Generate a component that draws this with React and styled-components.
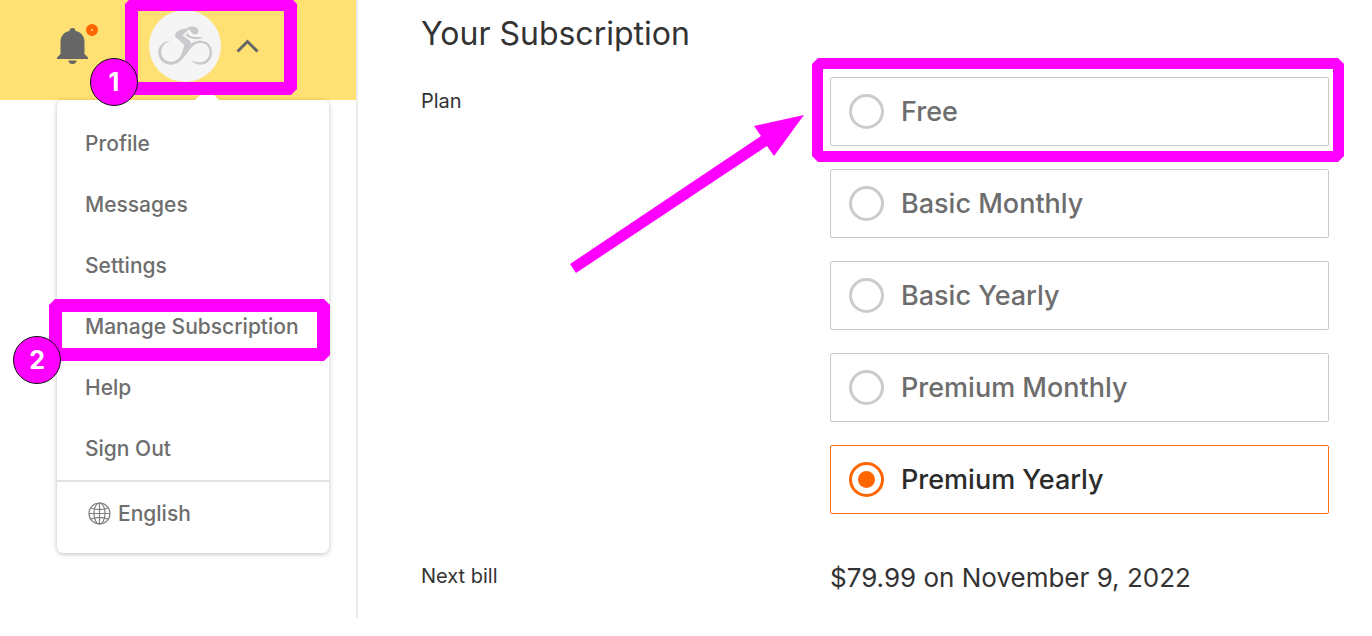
import React, { useState } from 'react'
import styled, { createGlobalStyle } from 'styled-components'

const GlobalStyle = createGlobalStyle`
  * {
    box-sizing: border-box;
  }
  body {
    margin: 0;
    background: #fff;
    color: #333;
    font-family: Inter, 'Liberation Sans', sans-serif;
  }
  button, input {
    font: inherit;
  }
`

const pink = '#ff00ff'

const Page = styled.div`
  display: flex;
  align-items: flex-start;
`

const Side = styled.aside`
  flex: 0 0 358px;
  min-height: 618px;
  border-right: 2px solid #ececec;
`

const TopBar = styled.header`
  display: flex;
  align-items: flex-start;
  height: 100px;
  padding: 10px 0 0 57px;
  gap: 61px;
  background: #ffe072;
`

const BellButton = styled.button`
  position: relative;
  display: flex;
  margin-top: 18px;
  padding: 0;
  border: 0;
  background: none;
`

const Dot = styled.span`
  position: absolute;
  top: -4px;
  left: 29px;
  width: 12px;
  height: 12px;
  border: 5px solid #ff6600;
  border-radius: 50%;
`

const AccountButton = styled.button`
  position: relative;
  display: flex;
  align-items: center;
  gap: 15px;
  padding: 0;
  border: 0;
  background: none;
`

const Menu = styled.nav`
  position: relative;
  width: 272px;
  margin-left: 57px;
  padding-top: 13px;
  background: #fff;
  border-radius: 6px;
  box-shadow: 0 1px 5px rgba(0, 0, 0, 0.26);

  &::before {
    content: '';
    position: absolute;
    top: -12px;
    left: 138px;
    border: 12px solid transparent;
    border-top: 0;
    border-bottom-color: #fff;
  }
`

const MenuList = styled.ul`
  margin: 0;
  padding: 0 0 1px;
  list-style: none;
  border-bottom: 2px solid #e2e2e2;
`

const MenuItem = styled.li`
  position: relative;
`

const MenuLink = styled.a`
  display: flex;
  align-items: center;
  height: 61px;
  padding-left: 28px;
  color: #6e6e6e;
  font-size: 21px;
  font-weight: 500;
  text-decoration: none;
`

const Language = styled.button`
  display: flex;
  align-items: center;
  gap: 7px;
  width: 100%;
  height: 71px;
  padding: 0 0 8px 31px;
  border: 0;
  background: none;
  color: #6e6e6e;
  font-size: 21px;
  font-weight: 500;
`

// thick marker outline with cut corners, drawn over its parent
const Highlight = styled.span`
  position: absolute;
  z-index: 2;
  top: ${({ $top }) => $top}px;
  right: ${({ $right }) => $right}px;
  bottom: ${({ $bottom }) => $bottom}px;
  left: ${({ $left }) => $left}px;
  border: ${({ $thick }) => $thick}px solid ${pink};
  clip-path: polygon(
    6px 0, calc(100% - 6px) 0, 100% 6px, 100% calc(100% - 6px),
    calc(100% - 6px) 100%, 6px 100%, 0 calc(100% - 6px), 0 6px
  );
  pointer-events: none;
`

const Step = styled.span`
  position: absolute;
  z-index: 3;
  top: ${({ $top }) => $top}px;
  left: ${({ $left }) => $left}px;
  display: flex;
  align-items: center;
  justify-content: center;
  width: 48px;
  height: 48px;
  border: 1px solid #111;
  border-radius: 50%;
  background: ${pink};
  color: #fff;
  font-size: 25px;
  font-weight: 700;
`

const Main = styled.main`
  flex: 1;
  min-width: 0;
  padding: 14px 43px 0 63px;
`

const Title = styled.h1`
  margin: 0 0 23px;
  font-size: 32px;
  line-height: 40px;
  font-weight: 400;
`

const Row = styled.section`
  position: relative;
  display: grid;
  grid-template-columns: 409px 1fr;
  margin-bottom: 46px;
`

const RowName = styled.h2`
  margin: 0;
  padding-top: ${({ $drop }) => $drop}px;
  font-size: 20px;
  line-height: 24px;
  font-weight: 400;
`

const Arrow = styled.svg`
  position: absolute;
  z-index: 2;
  top: 38px;
  left: 148px;
`

const Plans = styled.div`
  display: flex;
  flex-direction: column;
  gap: 23px;
`

const Plan = styled.label`
  position: relative;
  display: flex;
  align-items: center;
  gap: 17px;
  height: 69px;
  padding-left: 18px;
  border: 1px solid ${({ $checked }) => ($checked ? '#fc6a1c' : '#c8c8c8')};
  border-radius: 2px;
  color: ${({ $checked }) => ($checked ? '#2b2b2b' : '#6d6d6d')};
  font-size: 27px;
  font-weight: 500;
`

const Radio = styled.input`
  appearance: none;
  display: grid;
  place-content: center;
  width: 35px;
  height: 35px;
  margin: 0;
  border: 3px solid #cbcbcb;
  border-radius: 50%;

  &:checked {
    border-color: #ff6600;
  }
  &:checked::before {
    content: '';
    width: 17px;
    height: 17px;
    border-radius: 50%;
    background: #ff6600;
  }
`

const Bill = styled.p`
  margin: 0;
  padding-top: 1px;
  font-size: 26px;
  line-height: 34px;
`

const BellIcon = () => (
  <svg width="31" height="36" viewBox="0 0 31 36" fill="#666">
    <path d="M15.500 0c-2 0-3 1-3 3-5.500 1-9 5-9 11v12L0 29.500V31h31v-1.500L27.500 26V14c0-6-3.500-10-9-11 0-2-1-3-3-3zM11.500 32.500h8c0 2-1.500 3.500-4 3.500s-4-1.500-4-3.500z" />
  </svg>
)

const Avatar = () => (
  <svg width="72" height="72" viewBox="0 0 216 216">
    <circle cx="108" cy="108" r="108" fill="#f5f5f5" />
    <g fill="#c8c8cd" transform="translate(3 18)">
      <path d="M62 76C42 73 25 88 25 109c0 21 16 37 37 37 18 0 29-9 40-23l18-23c10-13 18-19 32-19 16 0 27 12 27 27 0 17-12 31-28 31-10 0-18-2-26-7 6 9 15 14 27 14 20 0 34-16 34-37 0-21-14-35-35-35-16 0-27 6-38 20l-19 24c-9 12-18 19-32 19-17 0-28-12-28-28 0-18 11-31 28-33z" />
      <path d="M75 57c2-9 11-16 25-18l18-3c-2 8-11 13-16 17l-5 5 20 14c7 5 7 10 2 17l-18 30-9 4c4-12 8-26 11-36L83 68c-6-3-9-6-8-11z" />
      <path d="M112 50c4 7 10 12 20 13l27 1c-6 5-18 6-28 5-12-2-20-6-24-12z" />
      <path d="M112 37c6-7 22-7 29-1 6 6 6 14 1 17-6 4-14 2-19-5-3-5-6-9-11-11z" />
    </g>
  </svg>
)

const Chevron = () => (
  <svg width="23" height="16" viewBox="0 0 23 16" fill="none" stroke="#666" strokeWidth="3">
    <path d="M1.500 13.500 11.500 3.500 21.500 13.500" />
  </svg>
)

const Globe = () => (
  <svg width="23" height="23" viewBox="0 0 23 23" fill="none" stroke="#808080" strokeWidth="1.200">
    <circle cx="11.500" cy="11.500" r="10.500" />
    <ellipse cx="11.500" cy="11.500" rx="5.500" ry="10.500" />
    <path d="M11.500 1v21M1 11.500h21M3 6c5 2 12 2 17 0M3 17c5-2 12-2 17 0" />
  </svg>
)

const menuItems = ['Profile', 'Messages', 'Settings', 'Manage Subscription', 'Help', 'Sign Out']
const plans = ['Free', 'Basic Monthly', 'Basic Yearly', 'Premium Monthly', 'Premium Yearly']

const App = () => {
  const [plan, setPlan] = useState('Premium Yearly')

  return (
    <Page>
      <GlobalStyle />
      <Side>
        <TopBar>
          <BellButton aria-label="Notifications">
            <BellIcon />
            <Dot />
          </BellButton>
          <AccountButton aria-label="Account menu">
            <Avatar />
            <Chevron />
            <Highlight $top={-12} $right={-38} $bottom={-13} $left={-24} $thick={13} />
            <Step $top={48} $left={-59}>1</Step>
          </AccountButton>
        </TopBar>
        <Menu>
          <MenuList>
            {menuItems.map((item) => (
              <MenuItem key={item}>
                <MenuLink href="#">{item}</MenuLink>
                {item === 'Manage Subscription' && (
                  <>
                    <Highlight $top={3} $right={-1} $bottom={-4} $left={-8} $thick={13} />
                    <Step $top={40} $left={-44}>2</Step>
                  </>
                )}
              </MenuItem>
            ))}
          </MenuList>
          <Language>
            <Globe />
            English
          </Language>
        </Menu>
      </Side>
      <Main>
        <Title>Your Subscription</Title>
        <Row>
          <RowName $drop={12}>Plan</RowName>
          <Plans role="radiogroup" aria-label="Plan">
            {plans.map((name) => (
              <Plan key={name} $checked={plan === name}>
                <Radio
                  type="radio"
                  name="plan"
                  value={name}
                  checked={plan === name}
                  onChange={() => setPlan(name)}
                />
                {name}
                {name === 'Free' && (
                  <Highlight $top={-20} $right={-16} $bottom={-17} $left={-19} $thick={11} />
                )}
              </Plan>
            ))}
          </Plans>
          <Arrow width="236" height="160" viewBox="0 0 236 160" fill={pink}>
            <path d="M235 0 205 41 198 31 7 158 1 149 192 21 185 11z" />
          </Arrow>
        </Row>
        <Row>
          <RowName $drop={4}>Next bill</RowName>
          <Bill>$79.99 on November 9, 2022</Bill>
        </Row>
      </Main>
    </Page>
  )
}

export default App
